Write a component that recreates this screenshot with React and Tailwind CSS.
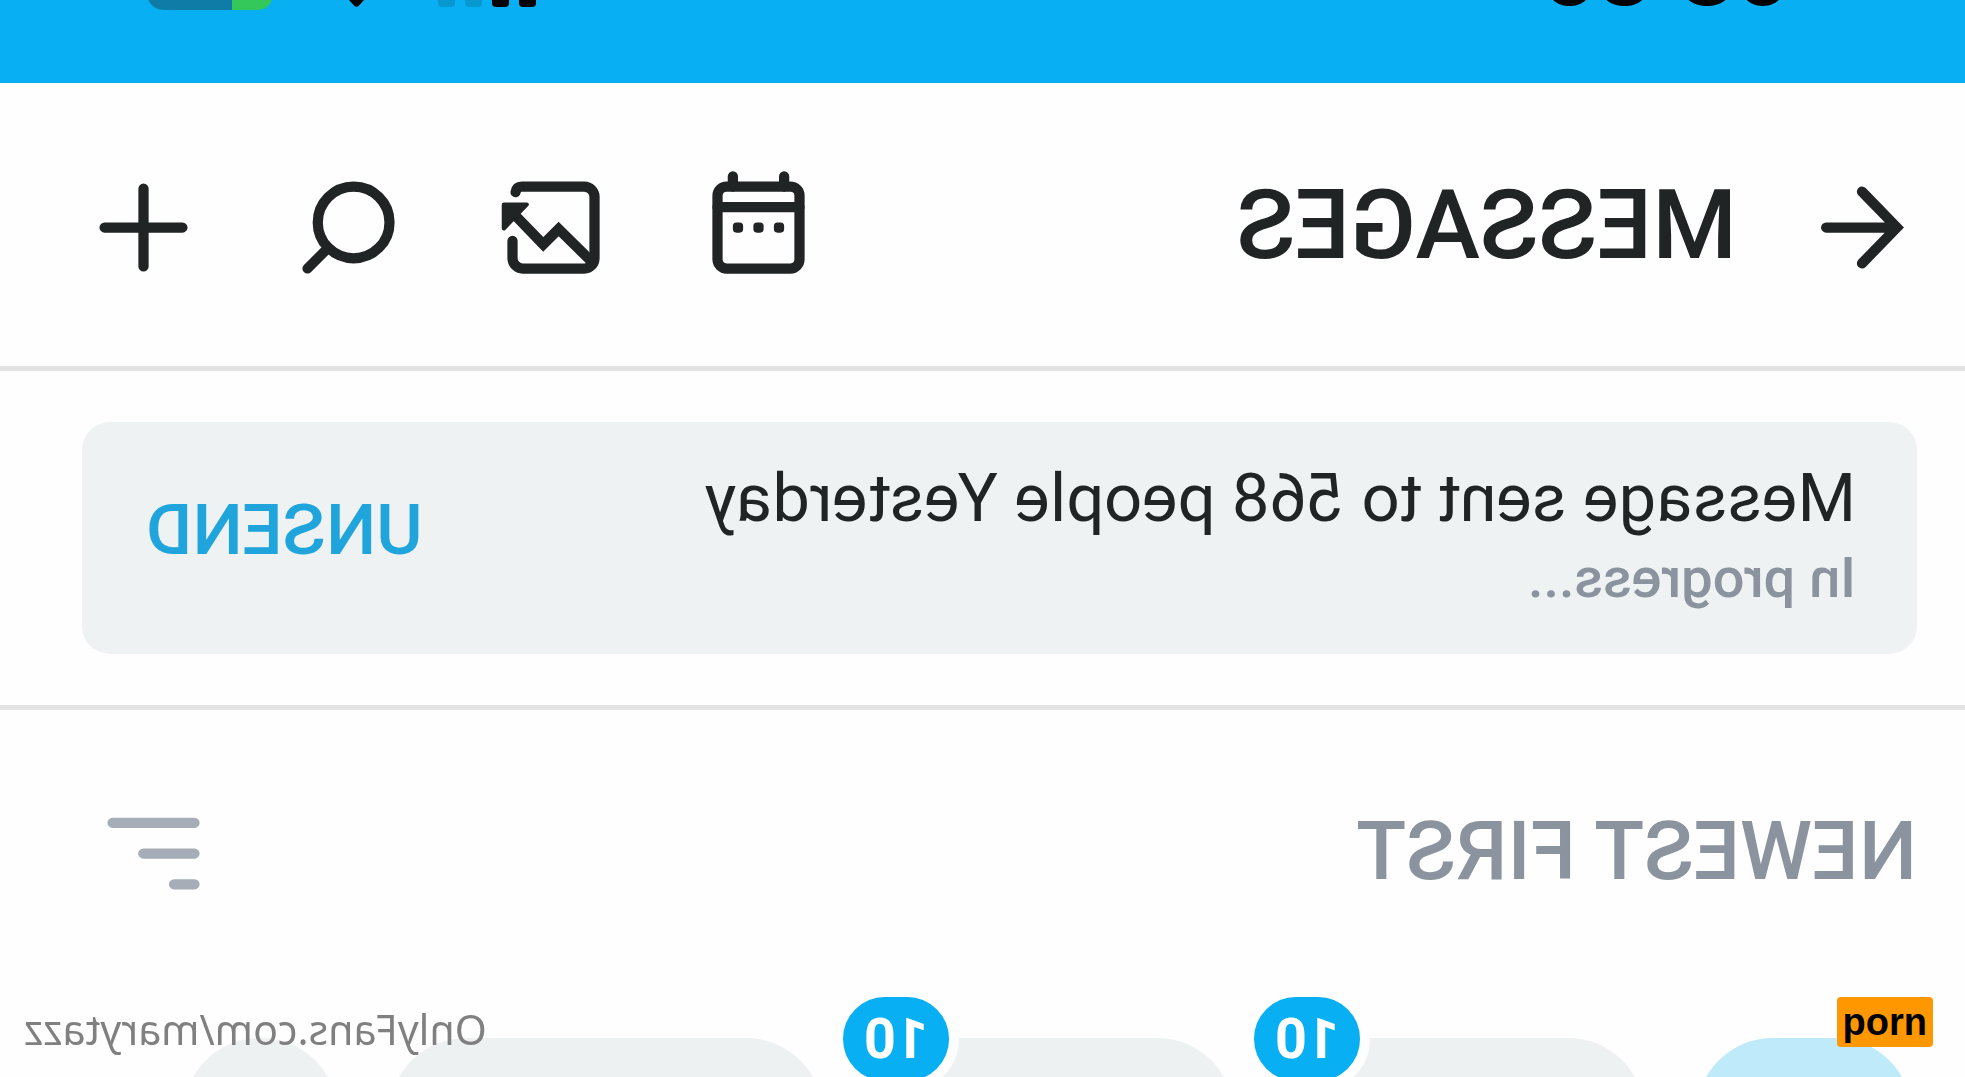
import React from 'react';

const ICON = {
    viewBox: '0 0 24 24',
    fill: 'none',
    stroke: 'currentColor',
    strokeWidth: 2,
    strokeLinecap: 'round',
    className: 'w-[123px] h-[123px] shrink-0',
    'aria-hidden': true,
};

const BackIcon = () => (
    <svg {...ICON}>
        <path d="M12.1 5 5.3 12l6.8 7M5.3 12h13.8" />
    </svg>
);

const CalendarIcon = () => (
    <svg {...ICON}>
        <rect x="4" y="4" width="16" height="16" rx="1.8" />
        <path d="M7 2v2M17 2v2M4 8h16" />
        <g fill="currentColor" stroke="none">
            <rect x="7" y="11" width="2" height="2" rx="0.7" />
            <rect x="11" y="11" width="2" height="2" rx="0.7" />
            <rect x="15" y="11" width="2" height="2" rx="0.7" />
        </g>
    </svg>
);

const GalleryIcon = () => (
    <svg {...ICON}>
        <path d="M19.4 5.1C19.3 4.4 18.9 4 18.2 4H6a2 2 0 0 0-2 2v12a2 2 0 0 0 2 2h12a2 2 0 0 0 2-2v-3.4" />
        <path d="M4.4 18.8 11 12.3l3 3 5.6-5.8" strokeLinecap="butt" />
        <path d="M17.2 7.5h4.5v4.7z" fill="currentColor" strokeWidth="0.8" strokeLinejoin="round" />
    </svg>
);

const SearchIcon = () => (
    <svg {...ICON}>
        <circle cx="11" cy="11" r="7" />
        <path d="m16 16 4 4" />
    </svg>
);

const PlusIcon = () => (
    <svg {...ICON}>
        <path d="M12 4.4v15.2M4.4 12h15.2" />
    </svg>
);

const SortIcon = () => (
    <svg {...ICON}>
        <path d="M4 6h16M4 12h10M4 18h4" />
    </svg>
);

const actions = [
    { label: 'Calendar', Icon: CalendarIcon },
    { label: 'Gallery', Icon: GalleryIcon },
    { label: 'Search', Icon: SearchIcon },
    { label: 'New message', Icon: PlusIcon },
];

const filters = [
    { id: 'all', className: 'w-[216px] bg-[#beeaf9]' },
    { id: 'unread', className: 'w-[360px] bg-[#edf1f2]', count: 10 },
    { id: 'priority', className: 'w-[360px] bg-[#edf1f2]', count: 10 },
    { id: 'lists', className: 'w-[434px] bg-[#edf1f2]' },
    { id: 'more', className: 'w-[155px] bg-[#edf1f2]' },
];

const StatusBar = () => (
    <div className="h-[83px] shrink-0 overflow-hidden bg-[#08b0f3] flex items-start justify-between pl-[174px] pr-[146px]">
        <span className="-mt-24 text-[84px] leading-[112px] font-bold text-black font-['Inter',sans-serif]">
            08<span className="align-super leading-none">:</span>36
        </span>
        <svg className="w-[390px] h-[12px]" viewBox="0 0 390 12" aria-hidden="true">
            <g fill="#000">
                <rect x="0" y="-20" width="17" height="27" rx="4" />
                <rect x="27" y="-20" width="17" height="27" rx="4" />
                <path d="M172 0h15l-5 5.5q-2.5 2.5-5 0z" />
            </g>
            <g fill="#0898d0">
                <rect x="54" y="-20" width="17" height="27" rx="4" />
                <rect x="81" y="-20" width="17" height="27" rx="4" />
            </g>
            <path d="M264 0h40v10h-24q-12 0-16-10z" fill="#34c759" />
            <path d="M304 0h84q-5 10-17 10h-67z" fill="#0e7ca6" />
        </svg>
    </div>
);

const App = () => {
    return (
        <div className="relative h-screen overflow-hidden bg-[#fefefe]">
            {/* The whole screen is flipped, only the tag reads normally */}
            <div className="relative h-full flex flex-col overflow-hidden -scale-x-100 text-[#212424] font-['Roboto',sans-serif]">
                <StatusBar />

                {/* Header */}
                <header className="shrink-0 flex items-center justify-between pl-[41px] pr-[82px] pt-[83px] pb-[77px] border-b-[5px] border-[#e3e3e4]">
                    <div className="flex items-center gap-16">
                        <button aria-label="Back"><BackIcon /></button>
                        <h1 className="pb-1.5 text-[97px] leading-[112px] font-medium">MESSAGES</h1>
                    </div>
                    <div className="flex items-center gap-[82px]">
                        {actions.map(({ label, Icon }) => (
                            <button key={label} aria-label={label}><Icon /></button>
                        ))}
                    </div>
                </header>

                {/* Sent message */}
                <section className="shrink-0 pl-12 pr-[82px] py-[51px] border-b-[5px] border-[#e3e3e4]">
                    <div className="flex items-center justify-between rounded-[28px] bg-[#eef2f3] pl-[61px] pr-16 py-9">
                        <div className="leading-[80px]">
                            <p className="text-[67px]">Message sent to 568 people Yesterday</p>
                            <p className="text-[56px] font-medium text-[#8a939e]">In progress...</p>
                        </div>
                        <button className="pb-4 text-[71px] leading-[80px] font-medium text-[#20a4dc]">UNSEND</button>
                    </div>
                </section>

                {/* Sorting */}
                <div className="shrink-0 flex items-center justify-between pl-12 pr-[92px] pt-[82px] text-[#8a939e]">
                    <h2 className="pb-1.5 text-[82px] leading-[112px] font-medium">NEWEST FIRST</h2>
                    <button aria-label="Sort" className="text-[#a7adb6]"><SortIcon /></button>
                </div>

                {/* Filters */}
                <div className="shrink-0 flex gap-[51px] pl-[53px] pt-[123px]">
                    {filters.map(({ id, className, count }) => (
                        <button key={id} aria-label={id} className={`relative h-[154px] shrink-0 rounded-full ${className}`}>
                            {count && (
                                <span className="absolute -top-[51px] -right-[41px] w-[126px] h-[104px] rounded-full border-[10px] border-[#fefefe] bg-[#08b0f3] text-white text-[56px] leading-[84px] font-bold text-center">
                                    {count}
                                </span>
                            )}
                        </button>
                    ))}
                </div>

                <a href="#profile" className="absolute right-6 bottom-[18px] text-[41px] leading-[60px] text-[#808080] font-['Noto_Sans',sans-serif]">
                    OnlyFans.com/marytazz
                </a>
            </div>

            <span className="absolute right-8 bottom-[30px] rounded-[4px] bg-[#ff9800] px-1.5 text-[38px] leading-[50px] font-bold text-black font-['Liberation_Sans',sans-serif]">
                porn
            </span>
        </div>
    );
};

export default App;
